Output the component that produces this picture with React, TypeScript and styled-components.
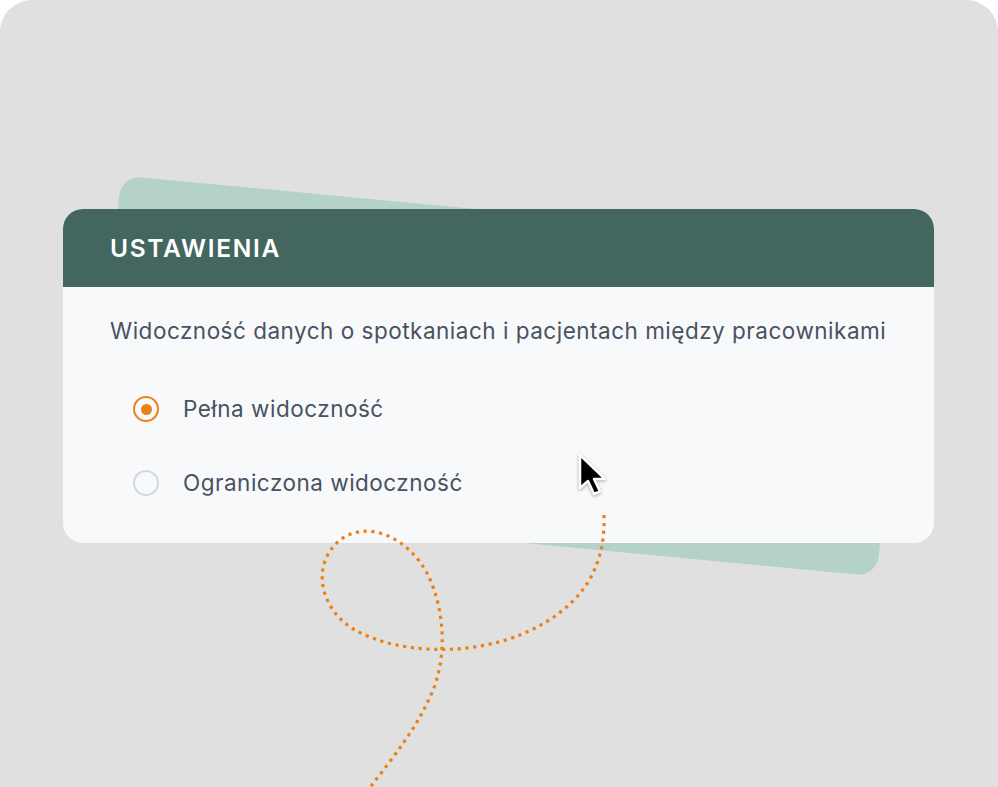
import React from 'react';
import styled, { createGlobalStyle } from 'styled-components';

const GlobalStyle = createGlobalStyle`
    html, body {
        margin: 0;
        padding: 0;
        background: #ffffff;
    }
    body {
        font-family: Inter, 'Noto Sans', 'Liberation Sans', sans-serif;
    }
`;

const Panel = styled.main`
    position: relative;
    width: 998px;
    height: 787px;
    box-sizing: border-box;
    padding: 209px 0 0 63px;
    background: #e0e0e0;
    border-radius: 32px 32px 0 0;
    overflow: hidden;
`;

const Stack = styled.div`
    display: grid;
    width: 871px;
    justify-items: center;
    align-items: center;
`;

const BackCard = styled.div`
    grid-area: 1 / 1;
    width: 790px;
    height: 328px;
    background: #b4d1ca;
    border-radius: 20px;
    transform: rotate(5.4deg);
`;

const Card = styled.section`
    grid-area: 1 / 1;
    position: relative;
    z-index: 1;
    width: 871px;
    height: 334px;
    background: #f8f9fb;
    border-radius: 20px;
    overflow: hidden;
    display: flex;
    flex-direction: column;
`;

const Header = styled.header`
    height: 78px;
    flex: none;
    display: flex;
    align-items: center;
    padding-left: 47px;
    background: #43675f;
`;

const Title = styled.h1`
    margin: 0;
    color: #ffffff;
    font-size: 24.5px;
    font-weight: 600;
    letter-spacing: 1.7px;
`;

const Body = styled.div`
    padding: 29px 0 0 47px;
    display: flex;
    flex-direction: column;
`;

const Question = styled.p`
    margin: 0 0 48px;
    color: #485261;
    font-size: 22.5px;
    letter-spacing: 0.5px;
    line-height: 30px;
`;

const Options = styled.ul`
    list-style: none;
    margin: 0;
    padding: 0 0 0 23px;
    display: flex;
    flex-direction: column;
    gap: 44px;
`;

const Option = styled.li`
    display: flex;
    align-items: center;
    gap: 24px;
    color: #485261;
    font-size: 22.5px;
    letter-spacing: 0.5px;
    line-height: 30px;
`;

const Radio = styled.span<{ $checked?: boolean }>`
    width: 26px;
    height: 26px;
    flex: none;
    box-sizing: border-box;
    border-radius: 50%;
    border: 2.5px solid ${(p) => (p.$checked ? '#e8821c' : '#d4d7db')};
    display: flex;
    align-items: center;
    justify-content: center;

    &::after {
        content: '';
        width: 11px;
        height: 11px;
        border-radius: 50%;
        background: ${(p) => (p.$checked ? '#e8821c' : 'transparent')};
    }
`;

const Overlay = styled.svg`
    position: absolute;
    z-index: 2;
    left: 0;
    top: 0;
    width: 998px;
    height: 787px;
    pointer-events: none;
`;

const Cursor = styled.svg`
    position: absolute;
    z-index: 3;
    left: 576px;
    top: 452px;
    width: 36px;
    height: 48px;
    filter: drop-shadow(0 1px 1.5px rgba(0, 0, 0, 0.35));
`;

const options = [
    { label: 'Pełna widoczność', checked: true },
    { label: 'Ograniczona widoczność', checked: false },
];

export default function App() {
    return (
        <>
            <GlobalStyle />
            <Panel>
                <Stack>
                    <BackCard />
                    <Card>
                        <Header>
                            <Title>USTAWIENIA</Title>
                        </Header>
                        <Body>
                            <Question>Widoczność danych o spotkaniach i pacjentach między pracownikami</Question>
                            <Options>
                                {options.map((o) => (
                                    <Option key={o.label}>
                                        <Radio $checked={o.checked} />
                                        {o.label}
                                    </Option>
                                ))}
                            </Options>
                        </Body>
                    </Card>
                </Stack>
                <Overlay viewBox="0 0 998 787">
                    <path
                        d="M604 515 C606 570, 580 610, 520 635 C470 655, 400 655, 355 630 C320 610, 310 565, 340 540 C370 518, 410 540, 428 575 C445 610, 448 660, 430 697 C415 730, 395 755, 368 790"
                        fill="none"
                        stroke="#ec8113"
                        strokeWidth="3.2"
                        strokeDasharray="3.2 4.6"
                    />
                </Overlay>
                <Cursor viewBox="0 0 36 48">
                    <path
                        d="M4 3 L4 36 L12 29 L18 42 L24 39.5 L18 27 L29 27 Z"
                        fill="#000000"
                        stroke="#ffffff"
                        strokeWidth="2.5"
                        strokeLinejoin="round"
                    />
                </Cursor>
            </Panel>
        </>
    );
}
